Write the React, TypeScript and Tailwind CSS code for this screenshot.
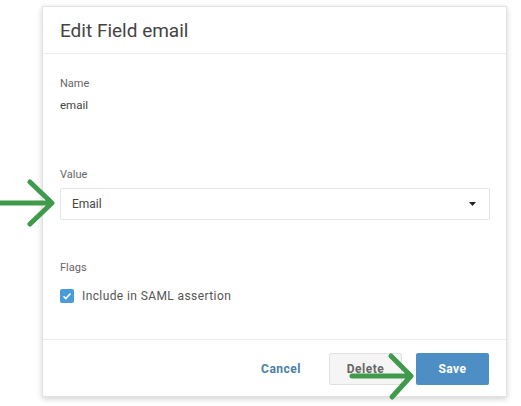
export default function App() {
  return (
    <div className="relative w-[521px] h-[406px] bg-white overflow-hidden font-['Roboto',sans-serif]">
      <div className="pl-[42px] pt-[6px]">
        <div className="w-[465px] h-[391px] flex flex-col bg-white border border-[#e2e2e2] shadow-[0_2px_6px_rgba(0,0,0,0.18)]">
          {/* header */}
          <div className="h-[47px] flex items-center px-[17px] border-b border-[#ececec]">
            <h1 className="text-[19px] text-[#444] leading-none">Edit Field email</h1>
          </div>

          {/* body */}
          <div className="flex-1 px-[17px] pt-[22px]">
            <div className="text-[11px] leading-4 text-[#666]">Name</div>
            <div className="mt-[5px] text-[11.5px] leading-4 text-[#444]">email</div>

            <div className="mt-[54px] text-[11px] leading-4 text-[#666]">Value</div>
            <div className="mt-[5px] h-[32px] w-[430px] flex items-center justify-between px-[11px] border border-[#e4e4e4] rounded-[2px]">
              <span className="text-[12px] text-[#444]">Email</span>
              <svg width="7" height="4" viewBox="0 0 7 4" className="mr-[2px]">
                <path d="M0 0h7L3.5 4z" fill="#222" />
              </svg>
            </div>

            <div className="mt-[40px] text-[11px] leading-4 text-[#666]">Flags</div>
            <label className="mt-[11px] flex items-center gap-[8px]">
              <span className="w-[14px] h-[14px] rounded-[2px] bg-[#4a9bd9] flex items-center justify-center">
                <svg width="10" height="10" viewBox="0 0 10 10">
                  <path d="M1.5 5.2l2.3 2.3L8.5 2.5" fill="none" stroke="white" strokeWidth="1.6" />
                </svg>
              </span>
              <span className="text-[12px] tracking-[0.4px] text-[#555]">Include in SAML assertion</span>
            </label>
          </div>

          {/* footer */}
          <div className="h-[57px] border-t border-[#ececec] flex items-start justify-end gap-[14px] pt-[13px] pr-[17px]">
            <button className="h-[32px] px-[14px] text-[12px] font-bold tracking-[0.5px] text-[#4a80a8]">Cancel</button>
            <button className="h-[32px] w-[73px] bg-[#f5f5f5] border border-[#e0e0e0] rounded-[2px] text-[12px] font-bold tracking-[0.5px] text-[#666]">Delete</button>
            <button className="h-[32px] w-[73px] bg-[#4d8fc4] rounded-[2px] text-[12px] font-bold tracking-[0.5px] text-white">Save</button>
          </div>
        </div>
      </div>

      {/* green annotation arrows */}
      <svg className="absolute left-0 top-[178px]" width="60" height="52" viewBox="0 0 60 52">
        <path d="M0 25H50M30 4L52 25L30 46" fill="none" stroke="#3f9b4b" strokeWidth="5" strokeLinecap="round" strokeLinejoin="round" />
      </svg>
      <svg className="absolute left-[348px] top-[352px]" width="70" height="50" viewBox="0 0 70 50">
        <path d="M4 24H62M43 4L63 24L44 45" fill="none" stroke="#3f9b4b" strokeWidth="5" strokeLinecap="round" strokeLinejoin="round" />
      </svg>
    </div>
  );
}
